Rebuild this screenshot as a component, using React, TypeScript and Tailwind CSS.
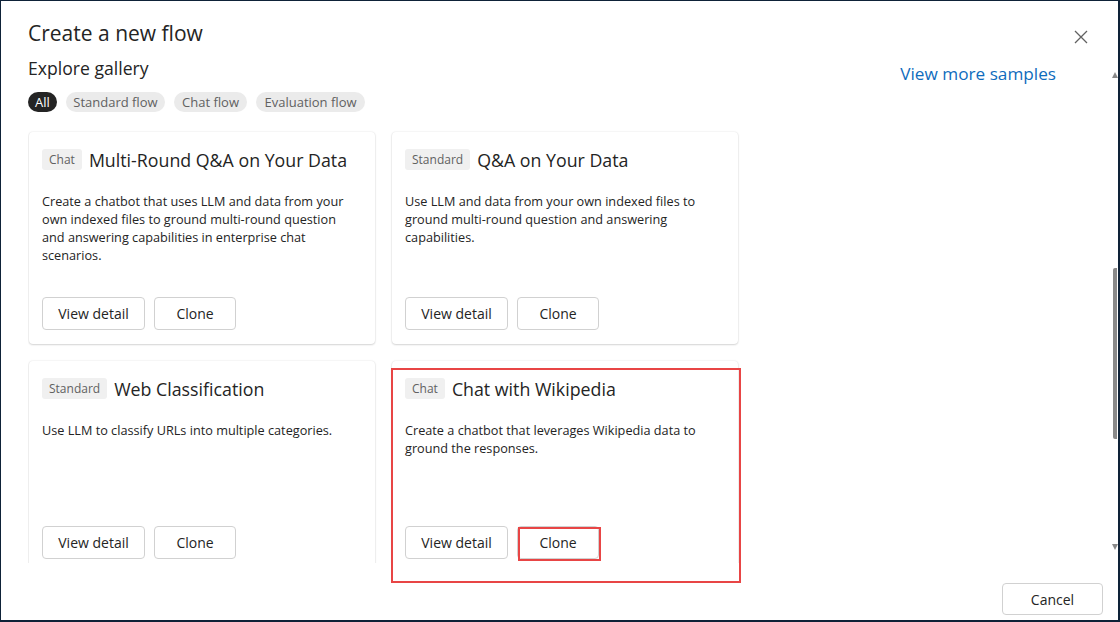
import React from "react";

type Card = {
  tag: string;
  title: string;
  lines: string[];
};

const cards: Card[] = [
  {
    tag: "Chat",
    title: "Multi-Round Q&A on Your Data",
    lines: [
      "Create a chatbot that uses LLM and data from your",
      "own indexed files to ground multi-round question",
      "and answering capabilities in enterprise chat",
      "scenarios.",
    ],
  },
  {
    tag: "Standard",
    title: "Q&A on Your Data",
    lines: [
      "Use LLM and data from your own indexed files to",
      "ground multi-round question and answering",
      "capabilities.",
    ],
  },
  {
    tag: "Standard",
    title: "Web Classification",
    lines: ["Use LLM to classify URLs into multiple categories."],
  },
  {
    tag: "Chat",
    title: "Chat with Wikipedia",
    lines: [
      "Create a chatbot that leverages Wikipedia data to",
      "ground the responses.",
    ],
  },
];

function FlowCard({ card }: { card: Card }) {
  return (
    <div className="w-[346px] h-[212px] bg-white rounded-[4px] shadow-[0_0_2px_rgba(0,0,0,0.12),0_1px_2px_rgba(0,0,0,0.14)] pt-[17px] px-[13px] pb-[14px] flex flex-col">
      <div className="flex items-center h-[21px]">
        <span className="h-[21px] px-[7px] bg-[#f0f0f0] rounded-[3px] text-[12px] leading-[21px] text-[#616161]">
          {card.tag}
        </span>
        <span className="ml-[7px] text-[17.8px] leading-[22px] text-[#242424]">
          {card.title}
        </span>
      </div>
      <div className="mt-[22px] text-[12.7px] leading-[18px] text-[#242424]">
        {card.lines.map((l, i) => (
          <div key={i} className="whitespace-nowrap">
            {l}
          </div>
        ))}
      </div>
      <div className="mt-auto flex gap-[9px]">
        <button className="w-[103px] h-[33px] border border-[#d1d1d1] rounded-[4px] bg-white text-[14px] text-[#242424]">
          View detail
        </button>
        <button className="w-[82px] h-[33px] border border-[#d1d1d1] rounded-[4px] bg-white text-[14px] text-[#242424]">
          Clone
        </button>
      </div>
    </div>
  );
}

export default function App() {
  return (
    <div
      className="relative w-[1120px] h-[622px] bg-white border-l border-t border-r-2 border-b-2 border-[#0e2238] overflow-hidden"
      style={{ fontFamily: '"Open Sans", "Noto Sans", sans-serif' }}
    >
      <div className="flex flex-col h-full pl-[27px] pr-[15px]">
        {/* header */}
        <div className="flex items-start justify-between pt-[19px]">
          <h1 className="text-[21px] leading-[26px] text-[#242424] font-normal">
            Create a new flow
          </h1>
          <button className="mt-[9px] mr-[14px] w-[16px] h-[16px] flex items-center justify-center">
            <svg width="14" height="14" viewBox="0 0 14 14">
              <path d="M1 1L13 13M13 1L1 13" stroke="#616161" strokeWidth="1.3" />
            </svg>
          </button>
        </div>
        {/* sub header */}
        <div className="flex items-start justify-between mt-[11px]">
          <div className="flex flex-col">
            <div className="text-[17.6px] leading-[22px] text-[#242424]">Explore gallery</div>
            <div className="flex gap-[9px] mt-[13px]">
              <span className="w-[29px] h-[20px] rounded-full bg-[#242424] text-white text-[13px] leading-[20px] text-center">
                All
              </span>
              <span className="w-[99px] h-[20px] rounded-full bg-[#ebebeb] text-[#616161] text-[13px] leading-[20px] text-center">
                Standard flow
              </span>
              <span className="w-[73px] h-[20px] rounded-full bg-[#ebebeb] text-[#616161] text-[13px] leading-[20px] text-center">
                Chat flow
              </span>
              <span className="w-[109px] h-[20px] rounded-full bg-[#ebebeb] text-[#616161] text-[13px] leading-[20px] text-center">
                Evaluation flow
              </span>
            </div>
          </div>
          <a className="mt-[6px] mr-[47px] text-[17.2px] leading-[22px] text-[#0f6cbd]">
            View more samples
          </a>
        </div>
        {/* gallery */}
        <div className="mt-[8px] h-[443px] overflow-hidden pt-[12px] pl-[1px]">
          <div className="grid grid-cols-[346px_346px] gap-[17px]">
            {cards.map((c, i) => (
              <FlowCard key={i} card={c} />
            ))}
          </div>
        </div>
        {/* footer */}
        <div className="flex justify-end mt-[20px]">
          <button className="w-[101px] h-[32px] border border-[#d1d1d1] rounded-[4px] bg-white text-[14px] text-[#242424]">
            Cancel
          </button>
        </div>
      </div>

      {/* scrollbar */}
      <div className="absolute right-0 top-[71px] w-0 h-0 border-l-[3px] border-r-[3px] border-b-[6px] border-l-transparent border-r-transparent border-b-[#8a8a8a]" />
      <div className="absolute right-[1px] top-[267px] w-[4px] h-[171px] rounded-l-[2px] bg-[#8a8a8a]" />
      <div className="absolute right-0 top-[543px] w-0 h-0 border-l-[3px] border-r-[3px] border-t-[6px] border-l-transparent border-r-transparent border-t-[#8a8a8a]" />

      {/* annotation highlights */}
      <div className="absolute left-[390px] top-[367px] w-[350px] h-[215px] border-2 border-[#e84545]" />
      <div className="absolute left-[517px] top-[526px] w-[83px] h-[34px] border-2 border-[#e84545]" />
    </div>
  );
}
